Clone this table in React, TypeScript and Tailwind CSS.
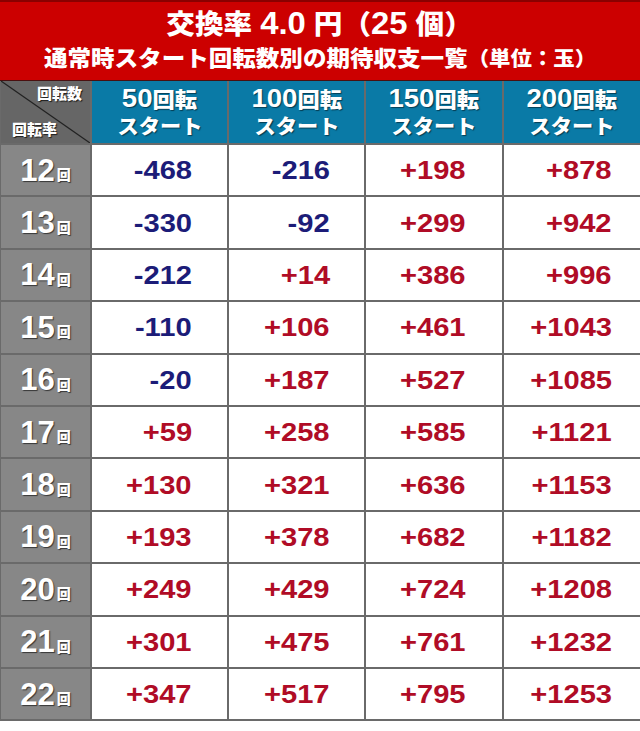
import React from "react";

const rows: { r: string; v: string[] }[] = [
  { r: "12", v: ["-468", "-216", "+198", "+878"] },
  { r: "13", v: ["-330", "-92", "+299", "+942"] },
  { r: "14", v: ["-212", "+14", "+386", "+996"] },
  { r: "15", v: ["-110", "+106", "+461", "+1043"] },
  { r: "16", v: ["-20", "+187", "+527", "+1085"] },
  { r: "17", v: ["+59", "+258", "+585", "+1121"] },
  { r: "18", v: ["+130", "+321", "+636", "+1153"] },
  { r: "19", v: ["+193", "+378", "+682", "+1182"] },
  { r: "20", v: ["+249", "+429", "+724", "+1208"] },
  { r: "21", v: ["+301", "+475", "+761", "+1232"] },
  { r: "22", v: ["+347", "+517", "+795", "+1253"] },
];

const heads = ["50", "100", "150", "200"];
const pads = ["pr-[35px]", "pr-[34px]", "pr-[36px]", "pr-[28px]"];

const font = "font-['Liberation_Sans','Noto_Sans_CJK_JP',sans-serif]";

export default function App() {
  return (
    <div className={`w-[640px] h-[731px] bg-white ${font}`}>
      <div className="h-[81px] bg-[#cc0000] border-t-2 border-[#8a0000] border-b border-b-[#4a1010] flex flex-col items-center text-white font-black">
        <div className="mt-[4px] text-[27px] leading-[35px] scale-x-[1.06]">
          交換率 <span className="text-[31px]">4.0</span> 円（<span className="text-[31px]">25</span> 個）
        </div>
        <div className="mt-[1px] text-[22px] leading-[30px] scale-x-[1.07]">
          通常時スタート回転数別の期待収支一覧<span className="text-[20px]">（単位：玉）</span>
        </div>
      </div>
      <div className="grid grid-cols-[89px_135px_135px_136px_136px] grid-rows-[62px_repeat(11,50.4px)] gap-[2px] bg-[#6a6a6a] pl-[1px] pb-[2px]">
        <div className="relative bg-[#666666] text-white font-black text-[15px] [text-shadow:1px_1px_1px_rgba(0,0,0,0.7)]">
          <svg className="absolute inset-0" width="89" height="62" viewBox="0 0 89 62">
            <line x1="0" y1="0" x2="89" y2="62" stroke="#222" strokeWidth="1.2" />
          </svg>
          <span className="absolute right-[8px] top-[4px] leading-[18px]">回転数</span>
          <span className="absolute left-[11px] bottom-[4px] leading-[18px]">回転率</span>
        </div>
        {heads.map((h) => (
          <div
            key={h}
            className="bg-[#0a7aa6] flex flex-col items-center justify-center text-white font-black [text-shadow:1px_1px_1px_rgba(0,0,0,0.5)]"
          >
            <div className="leading-[26px] scale-x-[1.06]">
              <span className="text-[26px]">{h}</span>
              <span className="text-[21px]">回転</span>
            </div>
            <div className="text-[20px] leading-[24px] scale-x-[1.06]">スタート</div>
          </div>
        ))}
        {rows.map((row) => (
          <React.Fragment key={row.r}>
            <div className="bg-[#878787] flex items-center justify-center text-white font-black [text-shadow:1px_1px_1px_rgba(0,0,0,0.6)]">
              <span className="text-[31px] leading-none">{row.r}</span>
              <span className="text-[14px] leading-none ml-[2px] mt-[10px]">回</span>
            </div>
            {row.v.map((v, i) => (
              <div key={i} className={`bg-white flex items-center justify-end ${pads[i]}`}>
                <span
                  className={`inline-block origin-right scale-x-[1.12] text-[26px] font-bold leading-none ${
                    v.startsWith("-") ? "text-[#1c1c78]" : "text-[#b00c26]"
                  }`}
                >
                  {v}
                </span>
              </div>
            ))}
          </React.Fragment>
        ))}
      </div>
    </div>
  );
}
